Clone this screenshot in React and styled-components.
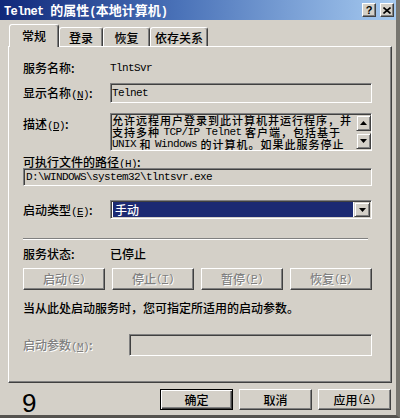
import styled, { createGlobalStyle } from "styled-components";

const GlobalStyle = createGlobalStyle`
  html, body {
    margin: 0;
    padding: 0;
    background: #d4d0c8;
  }
  body {
    font-family: "Noto Sans CJK SC", "Liberation Sans", sans-serif;
    font-size: 12px;
    font-weight: 500;
    line-height: 16px;
    color: #000;
  }
`;

const Window = styled.div`
  width: 400px;
  height: 418px;
  box-sizing: border-box;
  display: flex;
  flex-direction: column;
  background: #d4d0c8;
  border-right: 4px solid #77756f;
  border-bottom: 3px solid #55534f;
  overflow: hidden;
`;

const TitleBar = styled.div`
  flex: none;
  height: 20px;
  display: flex;
  align-items: center;
  padding: 0 2px 0 4px;
  background: linear-gradient(to right, #10287a 0%, #4a72b8 45%, #a6caf0 100%);
  color: #fff;
  font-weight: bold;
  font-size: 13px;
`;

const Title = styled.span`
  flex: 1;
  white-space: nowrap;
`;

const TitleButton = styled.div`
  width: 14px;
  height: 14px;
  box-sizing: border-box;
  margin-left: ${(p) => p.$gap || 0}px;
  display: flex;
  align-items: center;
  justify-content: center;
  background: #d4d0c8;
  border: 1px solid;
  border-color: #fff #404040 #404040 #fff;
  box-shadow: inset -1px -1px 0 #808080;
  color: #000;
  font-family: "Liberation Sans", sans-serif;
  font-size: 11px;
  font-weight: bold;
  line-height: 1;
`;

const Mono = styled.span`
  font-family: "Liberation Mono", monospace;
  font-size: ${(p) => p.$size || 11}px;
  letter-spacing: -0.6px;
  line-height: 1;
`;

const Key = styled.span`
  text-decoration: underline;
`;

const Body = styled.div`
  flex: 1;
  display: flex;
  flex-direction: column;
  padding: 4px 4px 0 8px;
`;

const TabStrip = styled.div`
  display: flex;
  align-items: flex-end;
  height: 22px;
  padding-left: 1px;
  position: relative;
  z-index: 1;
`;

const Tab = styled.div`
  width: ${(p) => p.$w}px;
  height: ${(p) => (p.$active ? 23 : 19)}px;
  margin-bottom: ${(p) => (p.$active ? -1 : 0)}px;
  box-sizing: border-box;
  display: flex;
  align-items: center;
  justify-content: center;
  padding-top: ${(p) => (p.$active ? 0 : 1)}px;
  background: #d4d0c8;
  border: 1px solid;
  border-bottom: none;
  border-color: #fff #404040 transparent #fff;
  border-radius: 3px 3px 0 0;
  box-shadow: inset -1px 0 0 #808080;
`;

const Panel = styled.div`
  height: 337px;
  box-sizing: border-box;
  display: flex;
  flex-direction: column;
  padding: 13px 19px 0 14px;
  border: 1px solid;
  border-color: #fff #404040 #404040 #fff;
  box-shadow: inset -1px -1px 0 #808080;
`;

const FieldRow = styled.div`
  display: grid;
  grid-template-columns: ${(p) => p.$label ?? 87}px 1fr;
  align-items: ${(p) => p.$align || "center"};
  height: ${(p) => p.$h}px;
  margin-top: ${(p) => p.$mt || 0}px;
`;

const Label = styled.div`
  white-space: nowrap;
  padding-top: ${(p) => p.$pt || 0}px;
  color: ${(p) => (p.$disabled ? "#808080" : "#000")};
  text-shadow: ${(p) => (p.$disabled ? "1px 1px 0 #fff" : "none")};
`;

const PathLabel = styled.div`
  margin-top: 4px;
  height: 13px;
  line-height: 13px;
  white-space: nowrap;
`;

const PathBox = styled.div`
  height: 18px;
  box-sizing: border-box;
  display: flex;
  align-items: center;
  padding-left: 2px;
  background: #d4d0c8;
  border: 1px solid;
  border-color: #808080 #fff #fff #808080;
  box-shadow: inset 1px 1px 0 #404040, inset -1px -1px 0 #d4d0c8;
`;

const Field = styled.div`
  height: 100%;
  box-sizing: border-box;
  display: flex;
  align-items: ${(p) => p.$align || "center"};
  padding: 0 ${(p) => p.$px || 0}px;
  background: ${(p) => p.$bg || "#d4d0c8"};
  border: 1px solid;
  border-color: #808080 #fff #fff #808080;
  box-shadow: inset 1px 1px 0 #404040, inset -1px -1px 0 #d4d0c8;
  overflow: hidden;
`;

const DescText = styled.div`
  flex: 1;
  padding: 0 0 0 1px;
  white-space: nowrap;
  font-size: 11px;
  letter-spacing: 1px;
`;

const DescLine = styled.div`
  height: 12px;
  line-height: 12px;
  display: flex;
  align-items: center;
`;

const ScrollBar = styled.div`
  width: 15px;
  height: 100%;
  padding: 1px 1px 1px 0;
  box-sizing: border-box;
  display: flex;
  flex-direction: column;
  justify-content: space-between;
`;

const ArrowButton = styled.div`
  width: ${(p) => p.$w || 15}px;
  height: ${(p) => p.$h || 15}px;
  box-sizing: border-box;
  display: flex;
  align-items: center;
  justify-content: center;
  background: #d4d0c8;
  border: 1px solid;
  border-color: #d4d0c8 #404040 #404040 #d4d0c8;
  box-shadow: inset 1px 1px 0 #fff, inset -1px -1px 0 #808080;
`;

const Highlight = styled.div`
  flex: 1;
  height: 100%;
  margin: 0 1px;
  padding-left: 2px;
  display: flex;
  align-items: center;
  background: #1c2a72;
  color: #fff;
`;

const Select = styled(Field)`
  padding: 1px;
  background: #fff;
`;

const Separator = styled.div`
  margin-top: 19px;
  margin-right: 4px;
  border-top: 1px solid #808080;
  border-bottom: 1px solid #fff;
`;

const ButtonRow = styled.div`
  display: flex;
  justify-content: space-between;
  height: 22px;
  margin-top: 6px;
`;

const Button = styled.div`
  width: ${(p) => p.$w || 82}px;
  height: ${(p) => p.$h || 22}px;
  box-sizing: border-box;
  display: flex;
  align-items: center;
  justify-content: center;
  background: #d4d0c8;
  border: 1px solid;
  border-color: ${(p) => (p.$default ? "#000" : "#fff #404040 #404040 #fff")};
  box-shadow: ${(p) =>
    p.$default
      ? "inset 1px 1px 0 #fff, inset -1px -1px 0 #404040, inset -2px -2px 0 #808080"
      : "inset -1px -1px 0 #808080"};
  color: ${(p) => (p.$disabled ? "#808080" : "#000")};
  text-shadow: ${(p) => (p.$disabled ? "1px 1px 0 #fff" : "none")};
  white-space: nowrap;
`;

const Hint = styled.div`
  margin-top: 10px;
  height: 16px;
  white-space: nowrap;
`;

const Footer = styled.div`
  flex: 1;
  display: flex;
  align-items: flex-start;
  padding-top: 6px;
`;

const PageNumber = styled.div`
  margin: 1px 0 0 14px;
  font-family: "Liberation Sans", sans-serif;
  font-size: 26px;
  font-weight: normal;
  line-height: 26px;
`;

const FooterButtons = styled.div`
  margin-left: auto;
  margin-right: 1px;
  display: flex;
  gap: 6px;
`;

const Accel = ({ k }) => (
  <Mono>
    (<Key>{k}</Key>)
  </Mono>
);

const Triangle = ({ up }) => (
  <svg width="7" height="4" viewBox="0 0 7 4">
    <polygon points={up ? "3.5,0 7,4 0,4" : "0,0 7,0 3.5,4"} fill="#000" />
  </svg>
);

const App = () => (
  <>
    <GlobalStyle />
    <Window>
      <TitleBar>
        <Title>
          <Mono $size={12}>Telnet </Mono>的属性<Mono $size={12}>(</Mono>本地计算机
          <Mono $size={12}>)</Mono>
        </Title>
        <TitleButton>?</TitleButton>
        <TitleButton $gap={4}>
          <svg width="8" height="7" viewBox="0 0 8 7">
            <path d="M0.5 0.5 L7.5 6.5 M7.5 0.5 L0.5 6.5" stroke="#000" strokeWidth="1.6" />
          </svg>
        </TitleButton>
      </TitleBar>

      <Body>
        <TabStrip>
          <Tab $w={50} $active>常规</Tab>
          <Tab $w={44}>登录</Tab>
          <Tab $w={47}>恢复</Tab>
          <Tab $w={58}>依存关系</Tab>
        </TabStrip>

        <Panel>
          <FieldRow $h={16}>
            <Label>服务名称:</Label>
            <Mono>TlntSvr</Mono>
          </FieldRow>

          <FieldRow $h={20} $mt={7}>
            <Label>
              显示名称<Accel k="N" />:
            </Label>
            <Field $px={1}>
              <Mono>Telnet</Mono>
            </Field>
          </FieldRow>

          <FieldRow $h={38} $mt={10} $align="start">
            <Label $pt={3}>
              描述<Accel k="D" />:
            </Label>
            <Field $align="stretch">
              <DescText>
                <DescLine>允许远程用户登录到此计算机并运行程序，并</DescLine>
                <DescLine>
                  支持多种&nbsp;<Mono>TCP/IP Telnet</Mono>&nbsp;客户端，包括基于
                </DescLine>
                <DescLine>
                  <Mono>UNIX</Mono>&nbsp;和&nbsp;<Mono>Windows</Mono>&nbsp;的计算机。如果此服务停止
                </DescLine>
              </DescText>
              <ScrollBar>
                <ArrowButton $h={16}>
                  <Triangle up />
                </ArrowButton>
                <ArrowButton $h={16}>
                  <Triangle />
                </ArrowButton>
              </ScrollBar>
            </Field>
          </FieldRow>

          <PathLabel>
            可执行文件的路径<Accel k="H" />:
          </PathLabel>
          <PathBox>
            <Mono>D:\WINDOWS\system32\tlntsvr.exe</Mono>
          </PathBox>

          <FieldRow $h={19} $mt={14}>
            <Label>
              启动类型<Accel k="E" />:
            </Label>
            <Select>
              <Highlight>手动</Highlight>
              <ArrowButton $w={16} $h={15}>
                <Triangle />
              </ArrowButton>
            </Select>
          </FieldRow>

          <Separator />

          <FieldRow $h={16} $mt={6}>
            <Label>服务状态:</Label>
            <span>已停止</span>
          </FieldRow>

          <ButtonRow>
            <Button $disabled>
              启动<Accel k="S" />
            </Button>
            <Button $disabled>
              停止<Accel k="T" />
            </Button>
            <Button $disabled>
              暂停<Accel k="P" />
            </Button>
            <Button $disabled>
              恢复<Accel k="R" />
            </Button>
          </ButtonRow>

          <Hint>当从此处启动服务时，您可指定所适用的启动参数。</Hint>

          <FieldRow $h={22} $mt={18} $label={106}>
            <Label $disabled>
              启动参数<Accel k="M" />:
            </Label>
            <Field />
          </FieldRow>
        </Panel>

        <Footer>
          <PageNumber>9</PageNumber>
          <FooterButtons>
            <Button $w={73} $h={21} $default>
              确定
            </Button>
            <Button $w={73} $h={21}>
              取消
            </Button>
            <Button $w={73} $h={21}>
              应用<Accel k="A" />
            </Button>
          </FooterButtons>
        </Footer>
      </Body>
    </Window>
  </>
);

export default App;
